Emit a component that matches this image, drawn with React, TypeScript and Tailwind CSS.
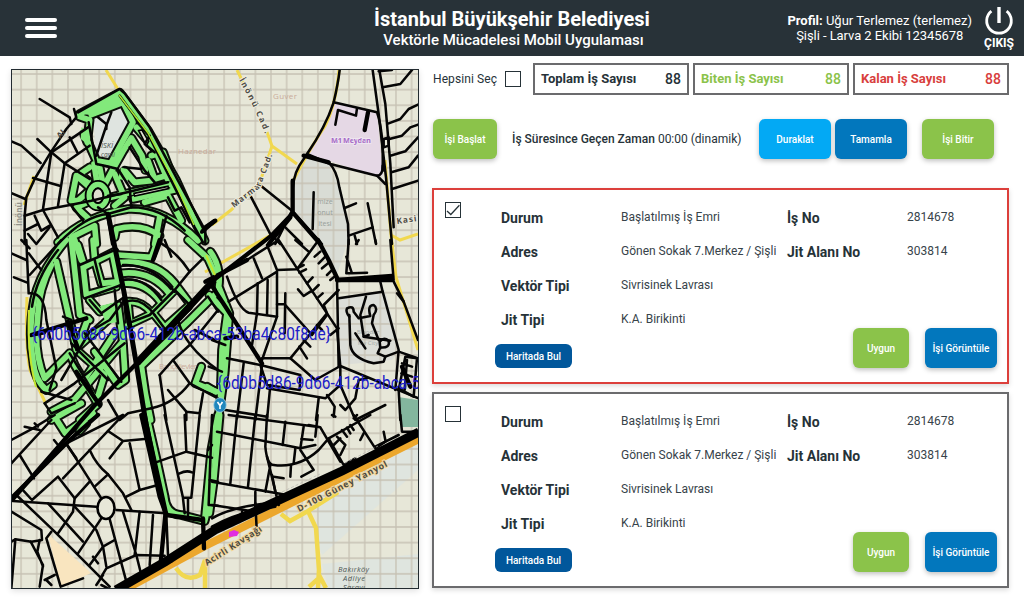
import type { ReactNode } from "react";

/* Each map tile is drawn at three units per pixel, positioned by its origin. */
type Tile = { at: string; green?: string[]; roads?: string[]; heavy?: string[] };

const tiles: Tile[] = [
  {
    at: "translate(8 64) scale(.33333)",
    green: [
      "M215 150L335 86L420 200L505 350L555 460L590 530",
      "M215 158L245 168L238 230L265 290L308 298L375 175L345 115L250 152",
      "M228 210L238 235", "M258 300L268 362", "M285 372L315 315L345 262L370 222L402 275L412 318",
      "M300 402L370 385L490 360L500 378L375 405", "M320 330L350 400L320 425",
      "M205 335L250 375L210 410L190 410Z", "M250 410L205 430L240 462",
      "M150 535Q230 455 360 435Q470 430 570 530", "M195 540L190 520L260 485L265 540",
      "M320 520L325 495Q400 475 455 515", "M455 460L440 540", "M385 190L440 255L478 345",
      "M430 275L465 265L490 330L440 345L420 290", "M350 320L380 355L430 350", "M410 415L480 395L520 470", "M245 310L215 330L240 350", "M275 310L285 360",
    ],
    roads: [
      "M95 105L185 160L190 180", "M10 232L40 245L98 297", "M88 225L130 265",
      "M198 135L205 160L175 195L130 262L80 345L55 400L50 455L50 540",
      "M130 265L240 190", "M130 265L105 435", "M130 265L170 298L245 245", "M170 298L150 425", "M170 298L245 345",
      "M75 342L155 365", "M10 387L52 405", "M50 455L105 438L190 422L250 410L370 382L480 355",
      "M105 438L150 520", "M80 455L100 500L125 485", "M50 500L90 480", "M60 510L85 540L125 490", "M185 220L208 265",
      "M190 425L225 470", "M270 160L295 180L295 195", "M310 145L295 185L265 275",
      "M210 145L335 75L350 88L425 190L510 350L592 500L592 540", "M335 95L420 210L500 370L560 490L585 535",
      "M242 175L265 300L290 305L330 315L365 370L370 430", "M365 250L410 320L440 355", "M425 215L410 240L440 265", "M350 310L400 315",
      "M300 395L340 390", "M270 430L300 450L370 430Q460 430 530 500", "M150 540Q230 455 300 450", "M580 505L620 470",
      "M475 455L455 540", "M480 400L500 440L520 430L545 475",
    ],
    heavy: ["M300 450L315 540", "M583 502L618 472"],
  },
  {
    at: "translate(212 64) scale(.33333)",
    roads: [
      "M383 18Q378 60 365 115Q340 190 285 270L262 305Q235 350 242 440",
      "M365 115L495 145Q515 200 512 320", "M370 182L378 138L432 155L435 133", "M482 18L500 150L522 340L540 540", "M502 18L520 120L535 300L545 490",
      "M285 270L355 300L495 335Q512 335 512 305", "M495 335L520 360", "M350 295Q375 320 382 370L408 480L410 540",
      "M140 360L240 440L190 540", "M110 385L180 520", "M305 385L302 495", "M398 432L432 418", "M467 418L492 540", "M410 515L482 490", "M428 515L435 540",
      "M240 440L330 540", "M220 490L270 540", "M500 22L540 18", "M512 70L565 60L600 18", "M530 178L565 165L590 135L618 122",
      "M532 225L570 215L595 190L618 182", "M535 275L580 262L618 220", "M538 325L590 310L618 275", "M540 375L618 350", "M515 225L530 220L530 245L515 250Z", "M190 525L205 540",
    ],
    heavy: ["M275 275L350 295", "M242 350L242 440", "M468 145L458 198", "M242 445L325 540", "M235 460L170 540", "M-20 490L10 470"],
  },
  {
    at: "translate(8 240) scale(.33333)",
    green: [
      "M175 0Q95 95 78 180Q60 280 75 360Q80 420 115 450L135 435", "M130 75Q92 150 90 220L85 280Q85 360 110 415L185 340",
      "M145 65L185 240L205 325", "M190 0L215 225L245 240", "M210 15L230 80L320 35", "M255 0L260 60L280 130L335 125", "M225 75L235 165L325 140",
      "M315 50L330 125", "M200 0L220 60", "M330 45L430 52L450 0", "M330 68Q440 55 500 130L545 190", "M340 100Q430 90 485 162",
      "M345 130Q410 125 455 182", "M355 185Q400 180 430 218", "M500 150L430 222L360 255", "M440 225L470 262L540 200", "M360 190L365 245",
      "M620 165L540 245L400 378L412 460L428 540", "M245 180L275 215L330 200", "M240 235L205 330L290 405L265 485L200 375L185 340",
      "M330 195L345 310L352 420L330 435L260 335", "M130 515L200 478L340 310", "M225 425L320 280", "M205 325L300 240", "M580 380L562 430L625 455", "M130 540L220 490", "M540 0L600 55L625 110", "M215 540L270 492",
    ],
    roads: [
      "M150 30Q85 110 72 200", "M55 0L62 160Q110 155 115 240L145 385L125 450", "M10 40L55 60", "M18 112L58 128", "M62 40L100 90", "M65 105L160 0",
      "M65 25L40 0", "M110 490L200 430L350 310", "M110 490L130 520L200 490", "M100 455L190 480", "M185 340L240 430L270 490",
      "M230 175L340 135", "M215 75L320 30", "M260 60L280 140", "M350 180L305 240L245 275L160 420", "M245 180L280 220L350 170", "M320 150L330 250",
      "M460 10Q510 40 545 95L500 150L425 225L360 250", "M500 150L545 195", "M470 0L490 50", "M440 225L480 280", "M545 95L585 55",
      "M230 280L340 425", "M190 310L300 420", "M205 330L190 240L165 230", "M345 75Q430 70 500 155", "M345 120Q410 110 460 180", "M355 185Q400 170 440 225",
      "M455 405L495 360L545 315L630 210", "M455 405L475 540", "M495 360L545 430L630 475", "M510 240Q530 320 630 390", "M585 460L575 520L535 515L480 450",
      "M430 505Q500 490 545 430", "M300 480L335 540L360 520L430 505", "M600 170L630 215", "M535 515L535 540", "M80 285L110 280", "M560 270L620 300",
    ],
    heavy: ["M70 285L235 235", "M435 60L455 0", "M205 395L275 495", "M180 245L210 325"],
  },
  {
    at: "translate(212 240) scale(.33333)",
    green: ["M-5 35Q28 80 20 140L52 220L38 400L18 540", "M-8 165L45 220L30 330L25 500", "M-15 440L10 455"],
    roads: [
      "M0 115L105 60L200 0L255 85L285 130L375 265L385 380L385 440", "M125 55L150 115", "M165 15L195 90L255 88L320 0", "M250 0L290 35", "M50 185L195 95L195 230L150 360",
      "M45 110Q80 210 110 218L195 230", "M137 130L135 220L120 315", "M167 120L165 225", "M195 193L218 193L300 285L345 225", "M220 160L218 280",
      "M380 150L335 195L345 220L235 355L150 355", "M235 355L310 420L385 378L620 475", "M258 148L275 168L295 155", "M285 130L302 112", "M300 155L320 135", "M315 175L332 160",
      "M255 85L275 75M262 98L282 88", "M262 320L285 355", "M275 300L295 320", "M355 285L380 265", "M315 255L330 270",
      "M320 70L340 50M330 85L350 68M345 105L362 88M355 120L370 108M308 50L325 35", "M375 120L380 380", "M380 175L512 155L505 125", "M512 155L560 330L550 450", "M545 125L575 185L618 300",
      "M440 0L432 12M490 0L492 10", "M410 0L403 100L415 100M403 50L420 100L465 98", "M535 0L545 120",
      "M462 170L445 225L455 290L535 302", "M430 280L460 325", "M455 290L470 285", "M412 230Q400 215 405 205Q425 195 425 215L440 235L475 228Q465 195 485 195Q500 205 485 225L480 250L500 300",
      "M412 225L415 315Q420 355 485 370L515 365L520 350L560 335", "M520 350L497 340L505 322Q535 325 530 302Q515 290 503 305L505 325",
      "M560 335L618 355M580 350L560 450M580 350L615 355L605 470L560 445M570 370L600 380M568 400L600 410M585 360L578 450",
      "M45 355L145 375L265 405L263 450L165 435L145 375", "M95 370L75 535", "M150 375L130 540", "M175 435L165 540", "M165 445L340 475L385 435L430 540L520 495",
      "M320 475L312 540", "M345 465L368 500L365 530", "M385 495L400 510L430 475L440 420L465 415", "M40 510L165 530", "M-10 380L30 395M0 300L40 315",
      "M575 185L555 160", "M560 450L565 540",
    ],
    heavy: ["M-20 125L105 60", "M-5 130L150 370", "M318 0L350 60L378 120L540 108", "M375 120L540 120", "M570 380L595 440", "M40 295L75 290"],
  },
  {
    at: "translate(8 415) scale(.33333)",
    green: ["M140 5L172 55L255 -5", "M215 48L235 25", "M415 0L445 130L470 245Q475 298 520 300L590 318L610 105L630 0", "M592 310L615 200"],
    roads: [
      "M10 75L75 40L140 0", "M50 35L95 45M90 35L80 25", "M10 145L130 15", "M35 120L78 190", "M10 250L175 85L345 0", "M175 85L280 250", "M345 0L165 190", "M245 105Q265 150 300 178L345 235L370 285",
      "M300 178L260 215", "M245 200L200 250L195 290L150 355", "M40 220L72 255L150 185L200 250", "M25 240L140 350L305 515", "M10 290L100 345L102 375L70 380L22 373L10 520",
      "M68 380L105 450L95 515M95 375L88 410L105 455", "M10 380L22 373", "M15 258L265 275M325 285L475 295", "M120 265L225 380", "M200 275L265 345L285 395L295 455", "M280 310L210 415",
      "M345 290L385 420L400 480M305 312L355 500M395 290L380 420M435 300L425 450", "M280 485L295 460L385 420L470 422M245 450L285 395L320 375M255 425L270 445M265 510L285 480M280 510L300 520",
      "M300 48L345 78L410 72M345 78L305 130M365 85L395 225L355 245M395 225L450 210", "M470 0L525 248L550 248L575 0M530 0L535 110L612 128M535 110L435 145M515 175Q535 165 552 172M525 250L530 295M540 250L540 300",
      "M175 88L205 130M138 75L150 90", "M130 350L115 370L158 515L225 490M110 495L140 480M115 495L130 510", "M605 270L630 272M605 195L630 200", "M475 300L480 420L490 440", "M600 105L612 90",
    ],
    heavy: ["M10 250L185 75L270 0", "M400 0L455 245L475 300L585 315", "M472 300L458 445", "M585 310L588 400", "M410 0L440 150"],
  },
  {
    at: "translate(212 415) scale(.33333)",
    green: ["M23 0L5 200L-8 295"],
    roads: [
      "M0 0L-10 270", "M50 0L325 37L385 140M325 37L290 30M15 50L265 100L310 90", "M75 0L55 205M130 0L108 215M165 0L160 95Q165 150 185 150Q260 160 320 105L350 70L475 0",
      "M220 20L212 90M275 35L265 100M268 72L302 75M317 0L310 65M250 100L245 145M265 105L305 165L268 185M237 150L235 185M185 185L215 190",
      "M0 200L225 240L350 190M165 125L200 270M175 150L160 230M130 230L130 280M0 270L130 290M350 70L395 150L430 130M425 0L490 100L520 80",
      "M375 65L400 90L385 120M365 90L385 70M390 45L405 65M405 38L415 55M415 30L425 45M445 75L455 55M435 0L425 10M360 0L370 5M515 50L520 75M565 0L570 50L620 50M490 95L560 60",
      "M0 310Q60 275 170 265M0 335Q80 290 190 275M90 290L90 310M180 180L190 230M265 230L350 195L400 160", "M130 265L135 360",
    ],
  },
];

const Layer = ({ kind, width, color }: { kind: "green" | "roads" | "heavy"; width: number; color: string }) => (
  <>
    {tiles.map((t) => (
      <g key={t.at} transform={t.at} fill="none" stroke={color} strokeWidth={width} strokeLinejoin="round" strokeLinecap="round">
        {(t[kind] ?? []).map((d) => <path key={d} d={d} />)}
      </g>
    ))}
  </>
);

function CityMap() {
  return (
    <svg viewBox="12 70 406 518" className="block h-full w-full" fontFamily="'Open Sans', sans-serif">
      <defs>
        <pattern id="grid" x="13.3" y="66.2" width="15.62" height="15.62" patternUnits="userSpaceOnUse">
          <path d="M7.8 0V15.62M0 7.8H15.62" stroke="#c6c1b3" strokeWidth="1.3" fill="none" />
        </pattern>
        <path id="inonu" d="M239 80Q253 104 266 136" />
        <path id="marmara" d="M234 208L260 188L274 151" />
        <path id="guney" d="M299 512L390 465" />
        <path id="kavsak" d="M207 566L265 529" />
      </defs>
      <rect x="12" y="70" width="406" height="518" fill="#e7e7d8" />
      <path d="M304 156L328 163L341 191L348 226L348 240L336 278L318 240L294 210Q291 180 304 156Z" fill="#d9dcd5" />
      <path d="M338 300L385 290L400 350L392 360L341 365Z" fill="#dcded8" />
      <path d="M418 440L325 478Q312 530 322 555L418 470ZM322 564L418 554V588H328Z" fill="#dfe5df" />
      <rect x="12" y="70" width="406" height="518" fill="url(#grid)" />
      <path d="M335 103L377 113L383 175Q379 178 375 176L308 154Z" fill="#e5d8e5" />
      <path d="M93 119L119 104L132 121L112 160L96 154Z" fill="#dfe4e0" />
      <path d="M48 534L91 573L61 587Z" fill="#f9e5bf" />
      <path d="M398 397L418 400V427H402Z" fill="#83b69e" />
      <g fill="none" stroke="#f1d84f" strokeWidth="3">
        <path d="M106 70L121 94M237 70L244 84M267 132L272 146L297 164M272 146L260 182L231 210L212 225M339 70Q336 104 325 126Q309 150 293 181M280 230L205 272M385 160L391 235L396 277L418 350M391 235L400 240L418 234" />
        <path d="M176 568Q186 583 200 575L205 560V588M281 514L290 521L308 511L316 528L319 570L318 588M308 511L338 492M319 578L309 587M319 575L326 588" strokeWidth="4.5" />
        <path d="M27 297Q25 345 30 370L45 402M34 176L24 205" />
      </g>
      <path d="M120 592L205 546L419 439" fill="none" stroke="#eca72c" strokeWidth="8" />
      <g fontSize="8" textAnchor="middle">
        <text x="197" y="154" fill="#c9ab9a" textLength="38">Haznedar</text>
        <text x="285" y="99" fill="#c9ab9a" textLength="24">Guver</text>
        <text x="178" y="369" fill="#c9ab9a" textLength="38">Bahçelievler</text>
        <text x="325" y="204" fontSize="7" fill="#979e9a">mize</text>
        <text x="325" y="215" fontSize="7" fill="#979e9a">onut</text>
        <text x="325" y="226" fontSize="7" fill="#979e9a">itesi</text>
        <text x="368" y="334" fontSize="6" fill="#a2a9a5">Bloodor</text>
        <text x="368" y="345" fontSize="6" fill="#a2a9a5">My City</text>
      </g>

      <Layer kind="green" width={29} color="#0b0f09" />
      <Layer kind="green" width={17} color="#82e97b" />
      <g transform="translate(8 64) scale(.33333)">
        <ellipse cx="270" cy="395" rx="26" ry="33" fill="none" stroke="#000" strokeWidth="28" />
        <ellipse cx="270" cy="395" rx="26" ry="33" fill="none" stroke="#82e97b" strokeWidth="17" />
        <ellipse cx="270" cy="395" rx="16" ry="22" fill="#deded0" stroke="#000" strokeWidth="6" />
        <path d="M218 150L335 85L348 108L250 153ZM340 310L368 330L360 350L330 345ZM220 190L242 200L235 238L218 225Z" fill="#82e97b" />
        <path d="M392 200L402 198L422 232L415 245ZM378 388L480 367L482 374L380 396Z" fill="#e1e2d2" stroke="#000" strokeWidth="5" />
      </g>
      <path d="M100 306L116 302L118 322L106 324Z" fill="#82e97b" />
      <Layer kind="roads" width={7.6} color="#050505" />
      <Layer kind="heavy" width={13} color="#000" />
      <path d="M119 95L148 133L177 187L194 225" fill="none" stroke="#a7e52e" strokeWidth="1.5" />
      <path d="M206 255L215 275M29 310Q27 355 36 387" fill="none" stroke="#c3e62e" strokeWidth="2" />
      <g fill="none" stroke="#000">
        <path d="M108 214L124 292L136 362L146 424L166 515" strokeWidth="5" />
        <path d="M293 213L271 236L215 279L192 304L137 363L94 406L66 438L12 500" strokeWidth="4.2" />
        <path d="M214 280L190 306L137 363" strokeWidth="7" />
        <path d="M116 590L165 562L215 530L290 495L342 471L419 432" strokeWidth="9" />
        <ellipse cx="106" cy="508" rx="8.5" ry="11" fill="#e7e7d8" strokeWidth="2.6" />
      </g>
      <path d="M282 492L320 474M345 463L378 446" stroke="#b9b9b3" strokeWidth=".8" strokeDasharray="3 2" />
      <path d="M229 532L234 530L239 532L237 536L229 537Z" fill="#e12ce2" />

      <g fontSize="8.2" fontWeight="700" fill="#4c4b45" stroke="#eceadc" strokeWidth="2" paintOrder="stroke">
        <text textLength="60"><textPath href="#inonu">İnönü Cad.</textPath></text>
        <text textLength="68"><textPath href="#marmara">Marmara Cad.</textPath></text>
        <text fontSize="8.8" textLength="100" stroke="#f4d798"><textPath href="#guney">D-100 Güney Yanyol</textPath></text>
        <text fontSize="8.8" textLength="66" stroke="#f4d798"><textPath href="#kavsak">Acirli Kavşağı</textPath></text>
        <text x="397" y="224" transform="rotate(-8 397 224)" letterSpacing="1">Kasi</text>
        <text x="60" y="139" transform="rotate(-45 60 139)" stroke="none">Al</text>
        <text x="22" y="226" transform="rotate(-90 22 226)" stroke="none" fill="#92938b">İnönü</text>
      </g>
      <g fontSize="7.5" fill="#4e5754" fontStyle="italic">
        <text x="101" y="148">İSKİ</text><text x="101" y="157" fontSize="6.5">cami</text>
        <text x="338" y="572" textLength="31">Bakırköy</text><text x="343" y="581" textLength="22">Adliye</text><text x="343" y="590" textLength="22">Sarayı</text>
      </g>
      <text x="331" y="143" fontSize="7.5" fontWeight="700" fill="#a66bc7" stroke="#eee5f0" strokeWidth="2" paintOrder="stroke" textLength="40">M1 Meydan</text>
      <g fontFamily="Roboto, sans-serif" fontSize="18.5" fill="#2020c8">
        <text x="32" y="340" textLength="299" lengthAdjust="spacingAndGlyphs">{"{6d0b5c86-9d66-412b-abca-53ba4c80f8de}"}</text>
        <text x="217" y="389" textLength="299" lengthAdjust="spacingAndGlyphs">{"{6d0b5d86-9d66-412b-abca-53ba4c80f8de}"}</text>
      </g>
      <ellipse cx="220" cy="405" rx="6.3" ry="7.3" fill="#1f87bd" stroke="#a7cfdf" strokeWidth=".8" />
      <path d="M217.5 402L220 405.5L222.5 402M220 405.5V409" stroke="#fff" strokeWidth="1.6" fill="none" />
    </svg>
  );
}

function Button({ className, children }: { className: string; children: ReactNode }) {
  return (
    <button className={`shrink-0 whitespace-nowrap rounded-md text-center text-[10px] font-medium text-white ${className}`}>
      {children}
    </button>
  );
}

const raised = "h-10 shadow-[0_2px_5px_rgba(0,0,0,0.25)]";

function Stat({ label, color }: { label: string; color: string }) {
  return (
    <div className={`flex h-8 w-[156px] items-center justify-between border-2 border-[#6b6b6d] px-[6px] text-[13px] ${color}`}>
      <span className="font-bold">{label}</span>
      <span className="text-[14px] font-medium">88</span>
    </div>
  );
}

function Check({ checked = false }: { checked?: boolean }) {
  return (
    <span role="checkbox" aria-checked={checked} className="block h-4 w-4 shrink-0 border border-[#263238]">
      {checked && (
        <svg viewBox="0 0 14 14" className="block h-full w-full" fill="none" stroke="#263238" strokeWidth="1.25">
          <path d="M1 8L4.8 11.5L13.4 2.3" />
        </svg>
      )}
    </span>
  );
}

const Label = ({ children }: { children: ReactNode }) => <dt className="pt-px text-[14px] font-bold leading-5">{children}</dt>;
const Value = ({ children }: { children: ReactNode }) => <dd className="whitespace-nowrap text-[12px] leading-5 text-[#37434a]">{children}</dd>;

function JobCard({ active = false }: { active?: boolean }) {
  return (
    <article className={`flex h-[196px] w-[577px] border-2 bg-white pl-[11px] pt-3 shadow-[0_2px_5px_rgba(0,0,0,0.15)] ${active ? "border-[#dc3f3b]" : "border-[#6b6b6d]"}`}>
      <Check checked={active} />
      <div className="ml-[34px] flex-1">
        <dl className="ml-[6px] grid h-[142px] grid-cols-[120px_166px_120px_1fr] grid-rows-[34px_34px_34px_34px] pt-[5px]">
          <Label>Durum</Label><Value>Başlatılmış İş Emri</Value><Label>İş No</Label><Value>2814678</Value>
          <Label>Adres</Label><Value>Gönen Sokak 7.Merkez / Şişli</Value><Label>Jit Alanı No</Label><Value>303814</Value>
          <Label>Vektör Tipi</Label><Value>Sivrisinek Lavrası</Value><dt /><dd />
          <Label>Jit Tipi</Label><Value>K.A. Birikinti</Value>
        </dl>
        <div className="-mt-4 flex items-end pr-[10px]">
          <Button className="h-6 w-[77px] bg-[#01579b]">Haritada Bul</Button>
          <Button className={`ml-auto w-14 bg-[#8bc34a] ${raised}`}>Uygun</Button>
          <Button className={`ml-4 w-[72px] bg-[#0277bd] ${raised}`}>İşi Görüntüle</Button>
        </div>
      </div>
    </article>
  );
}

export default function App() {
  return (
    <div className="flex h-[600px] w-[1024px] flex-col overflow-hidden bg-white font-['Roboto',sans-serif] text-[#263238]">
      <header className="grid h-14 shrink-0 grid-cols-[256px_512px_256px] items-center bg-[#283238] text-white">
        <button aria-label="Menü" className="ml-[25px] flex w-8 flex-col gap-1">
          <span className="h-1 rounded-full bg-white" />
          <span className="h-1 rounded-full bg-white" />
          <span className="h-1 rounded-full bg-white" />
        </button>
        <div className="pl-[3px] text-center">
          <h1 className="-ml-[3px] text-[20px] font-bold leading-6">İstanbul Büyükşehir Belediyesi</h1>
          <p className="text-[15px] font-medium leading-[18px]">Vektörle Mücadelesi Mobil Uygulaması</p>
        </div>
        <div className="flex items-center justify-end pr-[10px]">
          <div className="mr-3 whitespace-nowrap text-center text-[13px] leading-[15px]">
            <p><span className="font-bold">Profil:</span> Uğur Terlemez (terlemez)</p>
            <p className="tracking-[-0.06px]">Şişli - Larva 2 Ekibi 12345678</p>
          </div>
          <button className="-mt-px flex flex-col items-center text-[12px] font-bold leading-[14px]">
            <svg width="30" height="30" viewBox="0 0 30 30" fill="none" stroke="#fff" strokeWidth="2.8">
              <path d="M7.4 5.2A12.3 12.3 0 1 0 22.6 5.2" />
              <path d="M15 1V17" strokeWidth="3.4" />
            </svg>
            ÇIKIŞ
          </button>
        </div>
      </header>

      <main className="flex flex-1 pl-[11px]">
        <section className="mt-[13px] h-[520px] w-[408px] shrink-0 border border-[#222b30] shadow-[0_2px_6px_rgba(0,0,0,0.12)]">
          <CityMap />
        </section>
        <section className="ml-[13px] mt-[7px] w-[577px]">
          <div className="flex items-center">
            <span className="ml-px w-[72px] text-[12px] tracking-[0.1px]">Hepsini Seç</span>
            <Check />
            <div className="ml-3 flex gap-1">
              <Stat label="Toplam İş Sayısı" color="text-[#263238]" />
              <Stat label="Biten İş Sayısı" color="text-[#8bc34a]" />
              <Stat label="Kalan İş Sayısı" color="text-[#d8403d]" />
            </div>
          </div>
          <div className="ml-px mt-6 flex items-center">
            <Button className={`w-16 bg-[#8bc34a] ${raised}`}>İşi Başlat</Button>
            <p className="ml-[15px] w-[247px] whitespace-nowrap text-[12px]">
              <span className="font-medium">İş Süresince Geçen Zaman</span> 00:00 (dinamik)
            </p>
            <Button className={`w-[72px] bg-[#03a9f4] ${raised}`}>Duraklat</Button>
            <Button className={`ml-1 w-[72px] bg-[#0277bd] ${raised}`}>Tamamla</Button>
            <Button className={`ml-[15px] w-[72px] bg-[#8bc34a] ${raised}`}>İşi Bitir</Button>
          </div>
          <div className="mt-[29px] flex flex-col gap-2">
            <JobCard active />
            <JobCard />
          </div>
        </section>
      </main>
    </div>
  );
}
